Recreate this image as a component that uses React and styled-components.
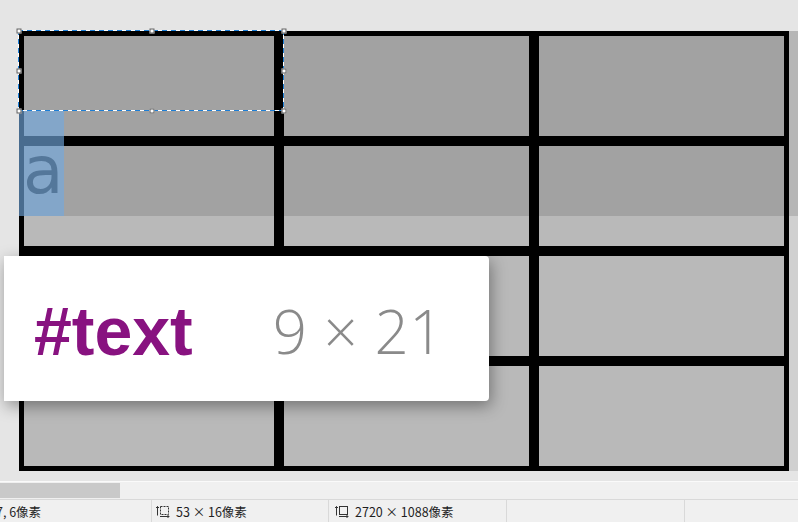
import React from 'react'
import styled, { createGlobalStyle } from 'styled-components'

const GlobalStyle = createGlobalStyle`
  html, body {
    margin: 0;
    padding: 0;
    overflow: hidden;
    background: #e5e5e5;
    font-family: "Noto Sans CJK SC", "Noto Sans", sans-serif;
  }
`

const Window = styled.div`
  width: 798px;
  height: 522px;
  display: flex;
  flex-direction: column;
  overflow: hidden;
`

const Viewport = styled.div`
  position: relative;
  height: 481px;
  flex: none;
  padding: 31px 0 10px 19px;
  box-sizing: border-box;
  background: #e5e5e5;
  display: flex;
  overflow: hidden;
`

const Table = styled.div`
  display: grid;
  grid-template-columns: 250px 245px 245px;
  grid-template-rows: repeat(4, 100px);
  gap: 10px;
  padding: 5px;
  background: #000;
`

const Cell = styled.div`
  background: #b9b9b9;
`

const Letter = styled.span`
  display: block;
  font-family: "DejaVu Sans", sans-serif;
  font-size: 66px;
  line-height: 60px;
  margin-top: -5px;
  margin-left: -1px;
  color: #262626;
`

const EdgeStrip = styled.div`
  width: 9px;
  background: #d0d0d0;
`

const Dim = styled.div`
  position: absolute;
  left: 19px;
  right: 0;
  top: 31px;
  height: 185px;
  background: rgba(0, 0, 0, 0.12);
  pointer-events: none;
`

const Highlight = styled.div`
  position: absolute;
  left: 19px;
  top: 110px;
  width: 45px;
  height: 106px;
  background: rgba(114, 168, 222, 0.645);
`

const dash = (dir) =>
  `repeating-linear-gradient(${dir}, #1c7ed6 0 5px, #ffffff 5px 9px)`

const Marquee = styled.div`
  position: absolute;
  left: 18px;
  top: 30px;
  width: 266px;
  height: 81px;
  background:
    ${dash('90deg')} left top / 100% 1px no-repeat,
    ${dash('90deg')} left bottom / 100% 1px no-repeat,
    ${dash('180deg')} left top / 1px 100% no-repeat,
    ${dash('180deg')} right top / 1px 100% no-repeat;
`

const Handle = styled.span`
  position: absolute;
  width: 5px;
  height: 5px;
  box-sizing: border-box;
  background: #fff;
  border: 1px solid #5a5a5a;
  left: ${(p) => p.$x};
  top: ${(p) => p.$y};
  transform: translate(-50%, -50%);
  margin-left: ${(p) => (p.$x === '100%' ? '-0.5px' : '0.5px')};
  margin-top: ${(p) => (p.$y === '100%' ? '-0.5px' : '0.5px')};
`

const Tooltip = styled.div`
  position: absolute;
  left: 4px;
  top: 256px;
  width: 485px;
  height: 145px;
  background: #fff;
  border-radius: 0 4px 4px 0;
  box-shadow: 2px 5px 16px rgba(0, 0, 0, 0.38);
  display: flex;
  align-items: center;
  gap: 80px;
  padding-left: 30px;
  box-sizing: border-box;
`

const NodeName = styled.span`
  font-family: "Liberation Sans", sans-serif;
  font-weight: 700;
  font-size: 68px;
  color: #881280;
  margin-top: 4px;
`

const NodeSize = styled.span`
  font-family: "Open Sans", "Liberation Sans", sans-serif;
  font-weight: 300;
  font-size: 60px;
  color: #8a8a8a;
  margin-top: 4px;
  letter-spacing: 0.5px;
`

const Scrollbar = styled.div`
  height: 17px;
  flex: none;
  border-top: 1px solid #fafafa;
  background: #f0f0f0;
  display: flex;
  align-items: center;
`

const Thumb = styled.div`
  width: 120px;
  height: 15px;
  background: #c9c9c9;
`

const StatusBar = styled.div`
  flex: 1;
  border-top: 1px solid #d9d9d9;
  background: #f0f0f0;
  display: flex;
  overflow: hidden;
`

const Section = styled.div`
  width: ${(p) => p.$w}px;
  flex: none;
  display: flex;
  align-items: center;
  gap: 6px;
  padding-left: ${(p) => p.$pad || 0}px;
  box-sizing: border-box;
  border-right: 1px solid #d9d9d9;
  font-size: 12.5px;
  color: #1e1e1e;
  white-space: nowrap;
  overflow: hidden;
`

const ClippedText = styled.span`
  margin-left: -11px;
`

const SelectionIcon = () => (
  <svg width="14" height="14" viewBox="0 0 14 14" fill="none" stroke="#333" strokeWidth="1">
    <path d="M1.5 2.5v9M0 4l1.5-1.5L3 4" />
    <rect x="4.5" y="2.5" width="8" height="8" strokeDasharray="2 1" />
    <path d="M4 12.5h9M11.5 11l1.5 1.5-1.5 1.5" />
  </svg>
)

const ImageSizeIcon = () => (
  <svg width="14" height="14" viewBox="0 0 14 14" fill="none" stroke="#333" strokeWidth="1">
    <path d="M1.5 2.5v9M0 4l1.5-1.5L3 4" />
    <rect x="4.5" y="2.5" width="8" height="8" />
    <path d="M4 12.5h9M11.5 11l1.5 1.5-1.5 1.5" />
  </svg>
)

const handles = [
  ['0%', '0%'], ['50%', '0%'], ['100%', '0%'],
  ['0%', '50%'], ['100%', '50%'],
  ['0%', '100%'], ['50%', '100%'], ['100%', '100%'],
]

export default function App() {
  const cells = Array.from({ length: 12 })
  return (
    <>
      <GlobalStyle />
      <Window>
        <Viewport>
          <Table>
            {cells.map((_, i) => (
              <Cell key={i}>{i === 3 && <Letter>a</Letter>}</Cell>
            ))}
          </Table>
          <EdgeStrip />
          <Dim />
          <Highlight />
          <Marquee>
            {handles.map(([x, y]) => (
              <Handle key={x + y} $x={x} $y={y} />
            ))}
          </Marquee>
          <Tooltip>
            <NodeName>#text</NodeName>
            <NodeSize>9 × 21</NodeSize>
          </Tooltip>
        </Viewport>
        <Scrollbar>
          <Thumb />
        </Scrollbar>
        <StatusBar>
          <Section $w={152}>
            <ClippedText>47, 6像素</ClippedText>
          </Section>
          <Section $w={177} $pad={4}>
            <SelectionIcon />
            <span>53 × 16像素</span>
          </Section>
          <Section $w={178} $pad={6}>
            <ImageSizeIcon />
            <span>2720 × 1088像素</span>
          </Section>
          <Section $w={178} />
          <Section $w={114} />
        </StatusBar>
      </Window>
    </>
  )
}
